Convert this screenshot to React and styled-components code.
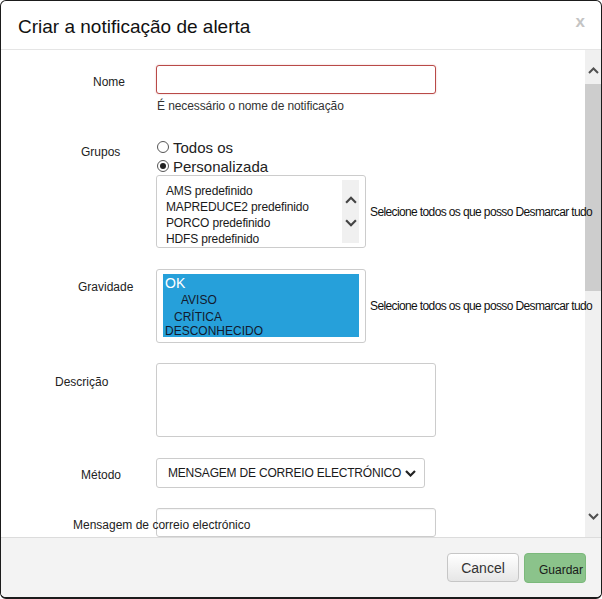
import React from "react";
import styled, { createGlobalStyle } from "styled-components";

const GlobalStyle = createGlobalStyle`
  html, body { margin: 0; padding: 0; background: #fff; }
  body { font-family: "Liberation Sans", Arial, sans-serif; color: #222; }
  * { box-sizing: border-box; }
`;

const Modal = styled.div`
  width: 602px;
  height: 599px;
  border: 1px solid #1b1b1b;
  border-bottom-width: 2px;
  border-radius: 6px;
  background: #fff;
  display: flex;
  flex-direction: column;
  overflow: hidden;
`;

const Header = styled.div`
  height: 49px;
  flex: none;
  border-bottom: 1px solid #e5e5e5;
  display: flex;
  align-items: center;
  justify-content: space-between;
  padding: 4px 16px 0 17px;
`;

const Title = styled.h4`
  margin: 0;
  font-size: 19px;
  font-weight: normal;
  color: #111;
  line-height: 24px;
`;

const Close = styled.span`
  font-size: 17px;
  font-weight: bold;
  color: #c4c4c4;
  line-height: 16px;
  margin-bottom: 10px;
`;

const Body = styled.div`
  flex: 1;
  display: flex;
  overflow: hidden;
`;

const Content = styled.div`
  flex: 1;
  min-width: 0;
  padding-top: 15px;
`;

const ScrollTrack = styled.div`
  width: 16px;
  flex: none;
  background: #f0f0f0;
  display: flex;
  flex-direction: column;
`;

const ArrowBtn = styled.div`
  height: 33px;
  flex: none;
  display: flex;
  justify-content: center;
  align-items: ${(p) => (p.$up ? "flex-start" : "flex-end")};
  padding: 17px 0;
`;

const Thumb = styled.div`
  height: 207px;
  flex: none;
  background: #cdcdcd;
`;

const TrackRest = styled.div`
  flex: 1;
`;

const Row = styled.div`
  display: grid;
  grid-template-columns: 155px 1fr;
  margin-top: ${(p) => p.$top || 0}px;
`;

const Label = styled.label`
  position: relative;
  z-index: 1;
  font-size: 12px;
  line-height: 16px;
  white-space: nowrap;
  color: #222;
  padding-left: ${(p) => p.$indent}px;
  padding-top: ${(p) => p.$pt}px;
`;

const Field = styled.div`
  display: flex;
  flex-direction: column;
  align-items: flex-start;
`;

const TextInput = styled.div`
  width: 280px;
  height: 29px;
  background: #fff;
  border: 1px solid ${(p) => (p.$invalid ? "#b94a48" : "#cccccc")};
  border-radius: 3px;
  box-shadow: ${(p) =>
    p.$invalid ? "0 0 2px rgba(185,74,72,0.35)" : "inset 0 1px 1px rgba(0,0,0,0.04)"};
`;

const Helper = styled.div`
  margin-top: 4px;
  padding-left: 1px;
  font-size: 12px;
  line-height: 16px;
  color: #333;
  letter-spacing: -0.1px;
`;

const RadioLine = styled.div`
  display: flex;
  align-items: center;
  gap: 4px;
  height: 19px;
  font-size: 15px;
  color: #222;
  padding-left: 1px;
`;

const RadioDot = styled.span`
  width: 12px;
  height: 12px;
  border-radius: 50%;
  border: 1px solid #555;
  background: #fff;
  display: flex;
  align-items: center;
  justify-content: center;
  margin-top: -1px;
  &::after {
    content: "";
    width: 6px;
    height: 6px;
    border-radius: 50%;
    background: ${(p) => (p.$checked ? "#222" : "transparent")};
  }
`;

const ListRow = styled.div`
  position: relative;
  z-index: 2;
  display: flex;
  align-items: center;
  gap: 4px;
  margin-top: ${(p) => p.$shift || 0}px;
`;

const ListBox = styled.div`
  width: 210px;
  height: ${(p) => p.$h}px;
  flex: none;
  border: 1px solid #cccccc;
  border-radius: 3px;
  background: #fff;
  display: flex;
  padding: ${(p) => p.$pad};
`;

const Options = styled.div`
  flex: 1;
  padding: 2.5px 0 0 5px;
`;

const Option = styled.div`
  font-size: 12px;
  line-height: 16.3px;
  white-space: nowrap;
  color: #1a1a1a;
  letter-spacing: -0.15px;
`;

const MiniScroll = styled.div`
  width: 17px;
  flex: none;
  background: #f0f0f0;
  display: flex;
  flex-direction: column;
  align-items: center;
  justify-content: center;
  gap: 15px;
`;

const SeverityBlock = styled.div`
  flex: 1;
  background: #26a0da;
  overflow: hidden;
`;

const SevOption = styled.div`
  padding-left: ${(p) => p.$indent}px;
  font-size: ${(p) => p.$size}px;
  line-height: ${(p) => p.$lh}px;
  color: ${(p) => p.$color};
  white-space: nowrap;
`;

const SelectAll = styled.span`
  font-size: 12px;
  letter-spacing: -0.62px;
  color: #111;
  white-space: nowrap;
`;

const TextArea = styled.div`
  width: 280px;
  height: 74px;
  border: 1px solid #cccccc;
  border-radius: 3px;
  background: #fff;
`;

const SelectBox = styled.div`
  width: 269px;
  height: 30px;
  border: 1px solid #cccccc;
  border-radius: 3px;
  background: #fff;
  display: flex;
  align-items: center;
  justify-content: space-between;
  padding: 0 8px 0 11px;
  font-size: 12px;
  letter-spacing: -0.2px;
  color: #1a1a1a;
  white-space: nowrap;
`;

const Footer = styled.div`
  height: 60px;
  flex: none;
  background: #f3f3f3;
  border-top: 1px solid #dcdcdc;
  display: flex;
  justify-content: flex-end;
  align-items: flex-start;
  gap: 5px;
  padding: 15px 15px 0 0;
`;

const Button = styled.button`
  width: ${(p) => p.$w}px;
  height: ${(p) => p.$h}px;
  border-radius: 4px;
  font-family: "Liberation Sans", Arial, sans-serif;
  cursor: pointer;
  display: flex;
  align-items: center;
`;

const CancelButton = styled(Button)`
  justify-content: center;
  background: linear-gradient(#ffffff, #e6e6e6);
  border: 1px solid #c6c6c6;
  font-size: 14px;
  color: #333;
  padding: 0;
`;

const SaveButton = styled(Button)`
  justify-content: flex-start;
  background: #8bc38b;
  border: 1px solid #7bb97b;
  font-size: 12px;
  color: #1a1a1a;
  padding: 4px 0 0 14px;
`;

const Chevron = ({ up, w = 11, h = 7, sw = 2, color = "#505050" }) => (
  <svg width={w} height={h} viewBox="0 0 11 7" style={{ display: "block" }}>
    <polyline
      points={up ? "1,6 5.5,1.5 10,6" : "1,1 5.5,5.5 10,1"}
      fill="none"
      stroke={color}
      strokeWidth={sw}
    />
  </svg>
);

export default function App() {
  return (
    <>
      <GlobalStyle />
      <Modal>
        <Header>
          <Title>Criar a notificação de alerta</Title>
          <Close>x</Close>
        </Header>
        <Body>
          <Content>
            <Row>
              <Label $indent={92} $pt={9}>Nome</Label>
              <Field>
                <TextInput $invalid />
                <Helper>É necessário o nome de notificação</Helper>
              </Field>
            </Row>

            <Row $top={24}>
              <Label $indent={80} $pt={6}>Grupos</Label>
              <Field>
                <RadioLine>
                  <RadioDot />
                  Todos os
                </RadioLine>
                <RadioLine>
                  <RadioDot $checked />
                  Personalizada
                </RadioLine>
                <ListRow $shift={-1}>
                  <ListBox $h={73} $pad="4px 6px 4px 4px">
                    <Options>
                      <Option>AMS predefinido</Option>
                      <Option>MAPREDUCE2 predefinido</Option>
                      <Option>PORCO predefinido</Option>
                      <Option>HDFS predefinido</Option>
                    </Options>
                    <MiniScroll>
                      <Chevron up w={12} h={8} color="#444" />
                      <Chevron w={12} h={8} color="#444" />
                    </MiniScroll>
                  </ListBox>
                  <SelectAll>Selecione todos os que posso Desmarcar tudo</SelectAll>
                </ListRow>
              </Field>
            </Row>

            <Row $top={21}>
              <Label $indent={77} $pt={10}>Gravidade</Label>
              <Field>
                <ListRow>
                  <ListBox $h={74} $pad="4px 6px 5px 6px">
                    <SeverityBlock>
                      <SevOption $indent={2} $size={14} $lh={18} $color="#ffffff">OK</SevOption>
                      <SevOption $indent={18} $size={12} $lh={17} $color="#131a2e">AVISO</SevOption>
                      <SevOption $indent={11} $size={12} $lh={16} $color="#131a2e">CRÍTICA</SevOption>
                      <SevOption $indent={2} $size={12} $lh={12} $color="#131a2e">DESCONHECIDO</SevOption>
                    </SeverityBlock>
                  </ListBox>
                  <SelectAll>Selecione todos os que posso Desmarcar tudo</SelectAll>
                </ListRow>
              </Field>
            </Row>

            <Row $top={20}>
              <Label $indent={54} $pt={11}>Descrição</Label>
              <Field>
                <TextArea />
              </Field>
            </Row>

            <Row $top={21}>
              <Label $indent={80} $pt={9}>Método</Label>
              <Field>
                <SelectBox>
                  MENSAGEM DE CORREIO ELECTRÓNICO
                  <Chevron w={11} h={7} sw={2.2} color="#222" />
                </SelectBox>
              </Field>
            </Row>

            <Row $top={20}>
              <Label $indent={72} $pt={9}>Mensagem de correio electrónico</Label>
              <Field>
                <TextInput />
              </Field>
            </Row>
          </Content>
          <ScrollTrack>
            <ArrowBtn $up>
              <Chevron up />
            </ArrowBtn>
            <Thumb />
            <TrackRest />
            <ArrowBtn>
              <Chevron />
            </ArrowBtn>
          </ScrollTrack>
        </Body>
        <Footer>
          <CancelButton $w={72} $h={29}>Cancel</CancelButton>
          <SaveButton $w={62} $h={30}>Guardar</SaveButton>
        </Footer>
      </Modal>
    </>
  );
}
